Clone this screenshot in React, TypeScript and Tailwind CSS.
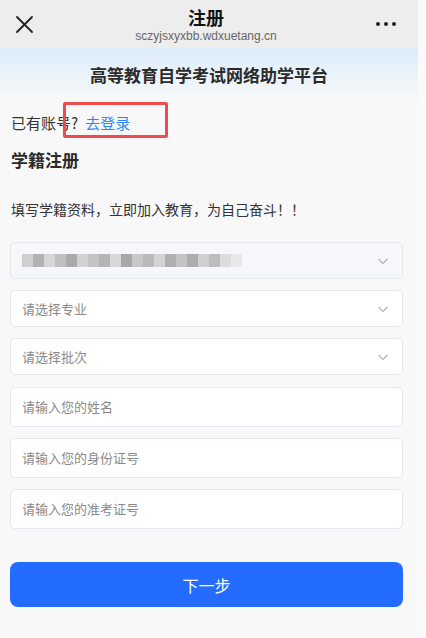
import React from 'react';

const FONT = '"Noto Sans CJK SC", "Noto Sans", sans-serif';

// mosaic blocks standing in for the blurred school name
const mosaic = ['#cfcfcf', '#b3b3b3', '#d6d6d6', '#c0c0c0', '#aaaaaa', '#d2d2d2', '#c4c4c4', '#b5b5b5', '#d8d8d8', '#a8a8a8', '#c8c8c8', '#bababa', '#d4d4d4', '#b0b0b0', '#c4c4c4', '#adadad', '#d0d0d0', '#bdbdbd', '#dcdcdc', '#e8e8e8'];

const Chevron = () => (
    <svg width="14" height="14" viewBox="0 0 14 14" fill="none" stroke="#b0b3b8" strokeWidth="1.2">
        <path d="M2.5 5l4.5 4.5L11.5 5" />
    </svg>
);

const SelectBox = ({ label, disabled }: { label?: string; disabled?: boolean }) => (
    <div className={`flex h-[37px] items-center justify-between rounded-[5px] border border-[#e4e7ed] pl-[11px] pr-[12px] ${disabled ? 'bg-[#f5f7fa]' : 'bg-white'}`}>
        {label ? (
            <span className="text-[13px] text-[#8a8a8a]">{label}</span>
        ) : (
            <div className="flex h-[13px] blur-[0.5px]">
                {mosaic.map((c, i) => (
                    <span key={i} className="h-full w-[11px]" style={{ backgroundColor: c }}></span>
                ))}
            </div>
        )}
        <Chevron />
    </div>
);

const InputBox = ({ placeholder }: { placeholder: string }) => (
    <div className="flex h-[40px] items-center rounded-[5px] border border-[#e4e7ed] bg-white pl-[11px]">
        <span className="text-[13px] text-[#8a8a8a]">{placeholder}</span>
    </div>
);

const App: React.FC = () => {
    return (
        <div className="flex h-[638px] w-[426px] overflow-hidden bg-[#fafafa]" style={{ fontFamily: FONT }}>
            <div className="flex w-[418px] flex-col bg-[#f8f8f8]">
                {/* top bar */}
                <div className="flex h-[48px] items-center justify-between bg-[#ededed] pl-[15px] pr-[22px]">
                    <svg width="19" height="19" viewBox="0 0 19 19" stroke="#222" strokeWidth="1.8" strokeLinecap="round">
                        <path d="M2 2l15 15M17 2L2 17" />
                    </svg>
                    <div className="flex flex-col items-center pl-[2px]">
                        <span className="text-[18px] font-bold leading-[23px] text-[#111]">注册</span>
                        <span className="text-[12px] leading-[14px] text-[#666]" style={{ fontFamily: '"Liberation Sans", Arial, sans-serif' }}>sczyjsxyxbb.wdxuetang.cn</span>
                    </div>
                    <div className="flex gap-[4px]">
                        <span className="h-[4px] w-[4px] rounded-full bg-[#222]"></span>
                        <span className="h-[4px] w-[4px] rounded-full bg-[#222]"></span>
                        <span className="h-[4px] w-[4px] rounded-full bg-[#222]"></span>
                    </div>
                </div>

                {/* banner */}
                <div className="flex h-[53px] items-center justify-center bg-gradient-to-b from-[#dcedfb] to-[#f8f8f8]">
                    <span className="text-[17px] font-bold text-[#2a2a2a]">高等教育自学考试网络助学平台</span>
                </div>

                <div className="flex flex-col pl-[10px] pr-[15px]">
                    <div className="relative mt-[10px] flex h-[24px] items-center pl-[1px] text-[15px]">
                        <span className="text-[#333]">已有账号?</span>
                        <span className="ml-[7px] text-[#2b87f6]">去登录</span>
                        <div className="absolute left-[53px] top-[-9px] h-[36px] w-[105px] rounded-[2px] border-[3px] border-[#ef4b4f]"></div>
                    </div>

                    <div className="mt-[12px] pl-[1px] text-[17px] font-bold leading-[26px] text-[#2a2a2a]">学籍注册</div>

                    <div className="mt-[26px] pl-[1px] text-[14px] leading-[20px] text-[#333]">填写学籍资料，立即加入教育，为自己奋斗！！</div>

                    <div className="mt-[23px] flex flex-col gap-[11px]">
                        <SelectBox disabled />
                        <SelectBox label="请选择专业" />
                        <SelectBox label="请选择批次" />
                    </div>

                    <div className="mt-[12px] flex flex-col gap-[11px]">
                        <InputBox placeholder="请输入您的姓名" />
                        <InputBox placeholder="请输入您的身份证号" />
                        <InputBox placeholder="请输入您的准考证号" />
                    </div>

                    <button className="mt-[33px] flex h-[45px] items-center justify-center rounded-[8px] bg-[#246bff] text-[16px] text-white">
                        下一步
                    </button>
                </div>
            </div>
        </div>
    );
};

export default App;
